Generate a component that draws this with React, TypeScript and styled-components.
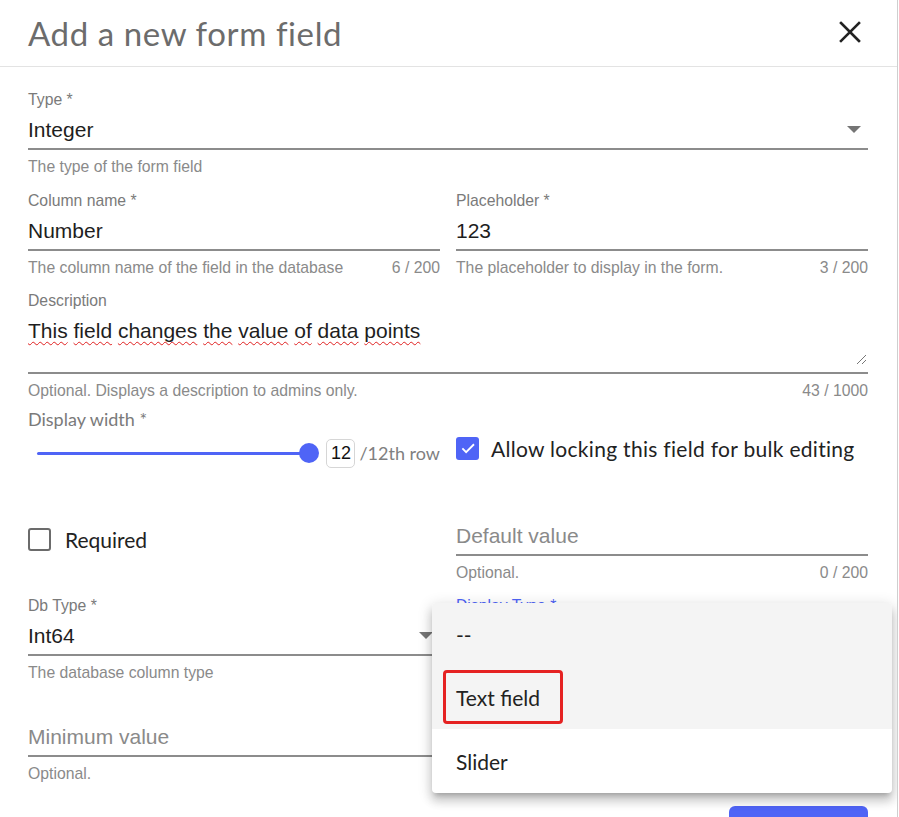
import React from 'react';
import styled, { createGlobalStyle } from 'styled-components';

const BLUE = '#4f64f6';

const Global = createGlobalStyle`
  html, body { margin: 0; padding: 0; background: #fff; }
  body { font-family: "Liberation Sans", Arial, sans-serif; overflow: hidden; }
  * { box-sizing: border-box; }
`;

const Dialog = styled.div`
  position: relative;
  width: 898px;
  height: 817px;
  border-right: 1px solid #cfcfcf;
  background: #fff;
  overflow: hidden;
`;

const Header = styled.header`
  height: 67px;
  border-bottom: 1px solid #e3e3e3;
  display: flex;
  align-items: center;
  justify-content: space-between;
  padding: 0 36px 0 28px;
`;

const Title = styled.h1`
  margin: 0;
  font-family: Lato, "Noto Sans", sans-serif;
  font-weight: 400;
  font-size: 33px;
  color: #6c6c6c;
  letter-spacing: 0.6px;
`;

const CloseButton = styled.button`
  border: 0;
  background: none;
  padding: 0;
  width: 22px;
  height: 22px;
  margin-top: -3px;
  display: flex;
  cursor: pointer;
`;

const Body = styled.div`
  padding: 25px 29px 0 28px;
`;

const Row = styled.div<{ $mt: number; $single?: boolean }>`
  display: grid;
  grid-template-columns: ${(p) => (p.$single ? '1fr' : '1fr 1fr')};
  column-gap: 16px;
  margin-top: ${(p) => p.$mt}px;
`;

const Field = styled.div`
  display: flex;
  flex-direction: column;
  min-width: 0;
`;

const Label = styled.label<{ $focused?: boolean }>`
  display: block;
  height: 16px;
  font-size: 15.75px;
  line-height: 16px;
  color: ${(p) => (p.$focused ? BLUE : '#7a7a7a')};
  white-space: nowrap;
`;

const InputRow = styled.div<{ $tall?: boolean; $focused?: boolean }>`
  position: relative;
  display: flex;
  align-items: flex-start;
  height: ${(p) => (p.$tall ? 65 : 42)}px;
  padding-top: 8px;
  border-bottom: 2px solid ${(p) => (p.$focused ? BLUE : '#8c8c8c')};
`;

const Value = styled.div<{ $placeholder?: boolean }>`
  flex: 1;
  font-size: 21px;
  line-height: 28px;
  color: ${(p) => (p.$placeholder ? '#8a8a8a' : '#1e1e1e')};
  white-space: nowrap;
`;

const Misspelled = styled.span`
  text-decoration: underline wavy #e02020;
  text-decoration-thickness: 1px;
  text-underline-offset: 3px;
  text-decoration-skip-ink: none;
`;

const Caret = styled.svg`
  margin: 10px 7px 0 0;
  flex: none;
`;

const ResizeHandle = styled.svg`
  position: absolute;
  right: 1px;
  bottom: 7px;
`;

const Helper = styled.div`
  display: flex;
  justify-content: space-between;
  margin-top: 9px;
  height: 16px;
  font-size: 15.75px;
  line-height: 16px;
  color: #8a8a8a;
  white-space: nowrap;
`;

const SectionLabel = styled.div`
  font-family: Lato, "Noto Sans", sans-serif;
  font-size: 18px;
  line-height: 20px;
  color: #7a7a7a;
`;

const SliderRow = styled.div`
  display: flex;
  align-items: center;
  height: 28px;
  margin-top: 10px;
`;

const Track = styled.div`
  position: relative;
  flex: 1;
  height: 3px;
  margin: 0 17px 0 9px;
  background: ${BLUE};
  border-radius: 2px;
`;

const Thumb = styled.span`
  position: absolute;
  right: -10px;
  top: 50%;
  width: 20px;
  height: 20px;
  margin-top: -10px;
  border-radius: 50%;
  background: ${BLUE};
`;

const NumberBox = styled.div`
  width: 29px;
  height: 29px;
  border: 1px solid #d6d6d6;
  border-radius: 5px;
  display: flex;
  align-items: center;
  justify-content: center;
  font-size: 18px;
  color: #111;
`;

const Suffix = styled.span`
  margin-left: 4px;
  font-family: Lato, "Noto Sans", sans-serif;
  font-size: 18px;
  color: #808080;
  white-space: nowrap;
`;

const CheckCol = styled.div<{ $pt: number }>`
  padding-top: ${(p) => p.$pt}px;
`;

const CheckRow = styled.label`
  display: flex;
  align-items: center;
  height: 24px;
`;

const Box = styled.span<{ $checked?: boolean }>`
  flex: none;
  width: 23px;
  height: 23px;
  border-radius: 3px;
  display: flex;
  align-items: center;
  justify-content: center;
  background: ${(p) => (p.$checked ? BLUE : '#fff')};
  border: ${(p) => (p.$checked ? 'none' : '2px solid #6b6b6b')};
`;

const CheckText = styled.span<{ $gap: number; $spacing?: number }>`
  margin-left: ${(p) => p.$gap}px;
  font-family: Lato, "Noto Sans", sans-serif;
  font-size: 21px;
  letter-spacing: ${(p) => p.$spacing ?? 0}px;
  color: #222;
  white-space: nowrap;
`;

const Footer = styled.div`
  display: flex;
  justify-content: flex-end;
  margin-top: 24px;
`;

const SaveButton = styled.button`
  width: 139px;
  height: 40px;
  border: 0;
  border-radius: 6px;
  background: ${BLUE};
  color: #fff;
  font-family: Lato, sans-serif;
  font-size: 16px;
`;

const Menu = styled.ul`
  position: absolute;
  left: 432px;
  top: 603px;
  width: 460px;
  margin: 0;
  padding: 0;
  list-style: none;
  background: #fff;
  border-radius: 4px;
  box-shadow: 0 5px 5px -3px rgba(0, 0, 0, 0.2), 0 8px 10px 1px rgba(0, 0, 0, 0.14),
    0 3px 14px 2px rgba(0, 0, 0, 0.12);
`;

const MenuItem = styled.li<{ $shade?: boolean; $h: number }>`
  position: relative;
  height: ${(p) => p.$h}px;
  display: flex;
  align-items: center;
  padding-left: 24px;
  font-family: Lato, "Noto Sans", sans-serif;
  font-size: 21px;
  color: #222;
  background: ${(p) => (p.$shade ? '#f4f4f4' : 'transparent')};
  &:first-child { border-radius: 4px 4px 0 0; }
  &:last-child { border-radius: 0 0 4px 4px; }
`;

const Highlight = styled.span`
  position: absolute;
  left: 11px;
  top: 4px;
  width: 120px;
  height: 54px;
  border: 3px solid #e52222;
  border-radius: 4px;
  pointer-events: none;
`;

const CaretIcon = () => (
  <Caret width="14" height="7" viewBox="0 0 14 7">
    <path d="M0 0h14L7 7z" fill="#757575" />
  </Caret>
);

type TextFieldProps = {
  label?: string;
  value?: React.ReactNode;
  placeholder?: string;
  helper?: string;
  counter?: string;
  select?: boolean;
  tall?: boolean;
  focused?: boolean;
};

const TextField = ({ label, value, placeholder, helper, counter, select, tall, focused }: TextFieldProps) => (
  <Field>
    <Label $focused={focused}>{label}</Label>
    <InputRow $tall={tall} $focused={focused}>
      {value ? <Value>{value}</Value> : <Value $placeholder>{placeholder}</Value>}
      {select && <CaretIcon />}
      {tall && (
        <ResizeHandle width="12" height="12" viewBox="0 0 12 12">
          <path d="M11 2L2 11M11 7L7 11" stroke="#777" strokeWidth="1" fill="none" />
        </ResizeHandle>
      )}
    </InputRow>
    <Helper>
      <span>{helper}</span>
      <span>{counter}</span>
    </Helper>
  </Field>
);

const description = 'This field changes the value of data points'.split(' ');

export default function App() {
  return (
    <>
      <Global />
      <Dialog>
        <Header>
          <Title>Add a new form field</Title>
          <CloseButton aria-label="Close">
            <svg width="22" height="22" viewBox="0 0 22 22">
              <path d="M2 2L20 20M20 2L2 20" stroke="#222" strokeWidth="2.6" strokeLinecap="square" />
            </svg>
          </CloseButton>
        </Header>
        <Body>
          <Row $mt={0} $single>
            <TextField label="Type *" value="Integer" helper="The type of the form field" select />
          </Row>
          <Row $mt={18}>
            <TextField
              label="Column name *"
              value="Number"
              helper="The column name of the field in the database"
              counter="6 / 200"
            />
            <TextField
              label="Placeholder *"
              value="123"
              helper="The placeholder to display in the form."
              counter="3 / 200"
            />
          </Row>
          <Row $mt={17} $single>
            <TextField
              label="Description"
              tall
              value={description.map((w, i) => (
                <React.Fragment key={i}>
                  <Misspelled>{w}</Misspelled>
                  {i < description.length - 1 ? ' ' : ''}
                </React.Fragment>
              ))}
              helper="Optional. Displays a description to admins only."
              counter="43 / 1000"
            />
          </Row>
          <Row $mt={10}>
            <div>
              <SectionLabel>Display width *</SectionLabel>
              <SliderRow>
                <Track>
                  <Thumb />
                </Track>
                <NumberBox>12</NumberBox>
                <Suffix>/12th row</Suffix>
              </SliderRow>
            </div>
            <CheckCol $pt={27}>
              <CheckRow>
                <Box $checked>
                  <svg width="18" height="18" viewBox="0 0 24 24">
                    <path d="M4.5 12.5l5 5L20 7" stroke="#fff" strokeWidth="2.4" fill="none" />
                  </svg>
                </Box>
                <CheckText $gap={12} $spacing={0.3}>
                  Allow locking this field for bulk editing
                </CheckText>
              </CheckRow>
            </CheckCol>
          </Row>
          <Row $mt={31}>
            <CheckCol $pt={29}>
              <CheckRow>
                <Box />
                <CheckText $gap={14}>Required</CheckText>
              </CheckRow>
            </CheckCol>
            <TextField placeholder="Default value" helper="Optional." counter="0 / 200" />
          </Row>
          <Row $mt={17}>
            <TextField label="Db Type *" value="Int64" helper="The database column type" select />
            <TextField label="Display Type *" value="Text field" select focused />
          </Row>
          <Row $mt={18}>
            <TextField placeholder="Minimum value" helper="Optional." />
            <TextField placeholder="Maximum value" helper="Optional." />
          </Row>
          <Footer>
            <SaveButton>Save</SaveButton>
          </Footer>
        </Body>
        <Menu role="listbox">
          <MenuItem $shade $h={63}>--</MenuItem>
          <MenuItem $shade $h={63}>
            Text field
            <Highlight />
          </MenuItem>
          <MenuItem $h={64}>Slider</MenuItem>
        </Menu>
      </Dialog>
    </>
  );
}
